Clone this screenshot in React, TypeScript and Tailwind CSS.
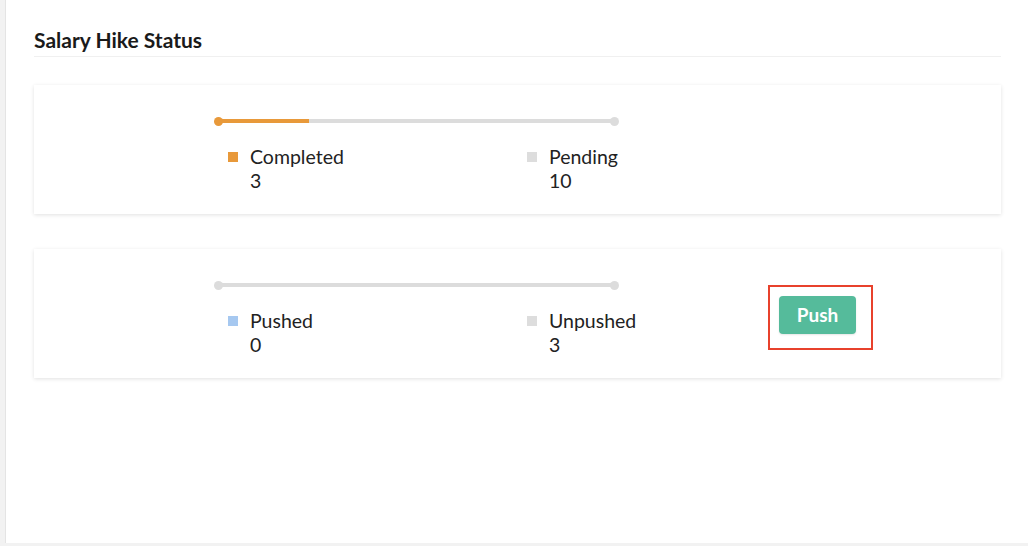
const Legend = ({ color, label, value }: { color: string; label: string; value: number }) => (
  <div className="flex shrink-0 items-start">
    <span className={`mt-[7px] h-[10px] w-[10px] shrink-0 ${color}`} />
    <div className="ml-[12px] text-[19.5px] leading-[24px] text-[#222]">
      <div>{label}</div>
      <div>{value}</div>
    </div>
  </div>
);

const StatusCard = ({
  done,
  total,
  first,
  second,
  showPush,
}: {
  done: number;
  total: number;
  first: { color: string; label: string; value: number };
  second: { color: string; label: string; value: number };
  showPush?: boolean;
}) => {
  const pct = total ? (done / total) * 100 : 0;
  return (
    <div className="flex h-[129px] items-start bg-white shadow-[0_1px_4px_rgba(0,0,0,0.12)]">
      <div className="ml-[180px] w-[404px] shrink-0 pt-[31.5px]">
        <div className="relative mx-[4px] h-[9px]">
          <div className="absolute left-0 right-0 top-[2.5px] h-[4px] bg-[#dcdcdc]" />
          <div className="absolute left-0 top-[2.5px] h-[4px] bg-[#e8993a]" style={{ width: `${pct}%` }} />
          <span
            className={`absolute -left-[4.5px] top-0 h-[9px] w-[9px] rounded-full ${done > 0 ? 'bg-[#e8993a]' : 'bg-[#dcdcdc]'}`}
          />
          <span className="absolute -right-[4.5px] top-0 h-[9px] w-[9px] rounded-full bg-[#dcdcdc]" />
        </div>
        <div className="mt-[19.5px] flex pl-[14px]">
          <div className="w-[299px] shrink-0">
            <Legend {...first} />
          </div>
          <Legend {...second} />
        </div>
      </div>
      {showPush && (
        <div className="ml-[150px] mt-[36px] border-2 border-[#e8412c] pb-[14px] pl-[9px] pr-[15px] pt-[9px]">
          <button className="h-[38px] w-[77px] rounded-[4px] bg-[#55bb9b] text-[19px] font-bold text-white shadow-[0_1px_2px_rgba(0,0,0,0.1)]">
            Push
          </button>
        </div>
      )}
    </div>
  );
};

export default function App() {
  return (
    <div className="flex h-[546px] w-[1028px] bg-[#f2f2f2] font-['Lato','Noto_Sans',sans-serif]">
      <div className="ml-[5px] h-[543px] flex-1 border-l border-[#e4e4e4] bg-white pl-[28px] pr-[27px] pt-[27px]">
        <h1 className="border-b border-[#f0f0f0] pb-[3px] text-[21px] font-bold leading-[26px] text-[#1a1a1a]">
          Salary Hike Status
        </h1>
        <div className="mt-[28px] flex flex-col gap-[35px]">
          <StatusCard
            done={3}
            total={13}
            first={{ color: 'bg-[#e8993a]', label: 'Completed', value: 3 }}
            second={{ color: 'bg-[#dddddd]', label: 'Pending', value: 10 }}
          />
          <StatusCard
            done={0}
            total={3}
            first={{ color: 'bg-[#a6c8f0]', label: 'Pushed', value: 0 }}
            second={{ color: 'bg-[#dddddd]', label: 'Unpushed', value: 3 }}
            showPush
          />
        </div>
      </div>
    </div>
  );
}
